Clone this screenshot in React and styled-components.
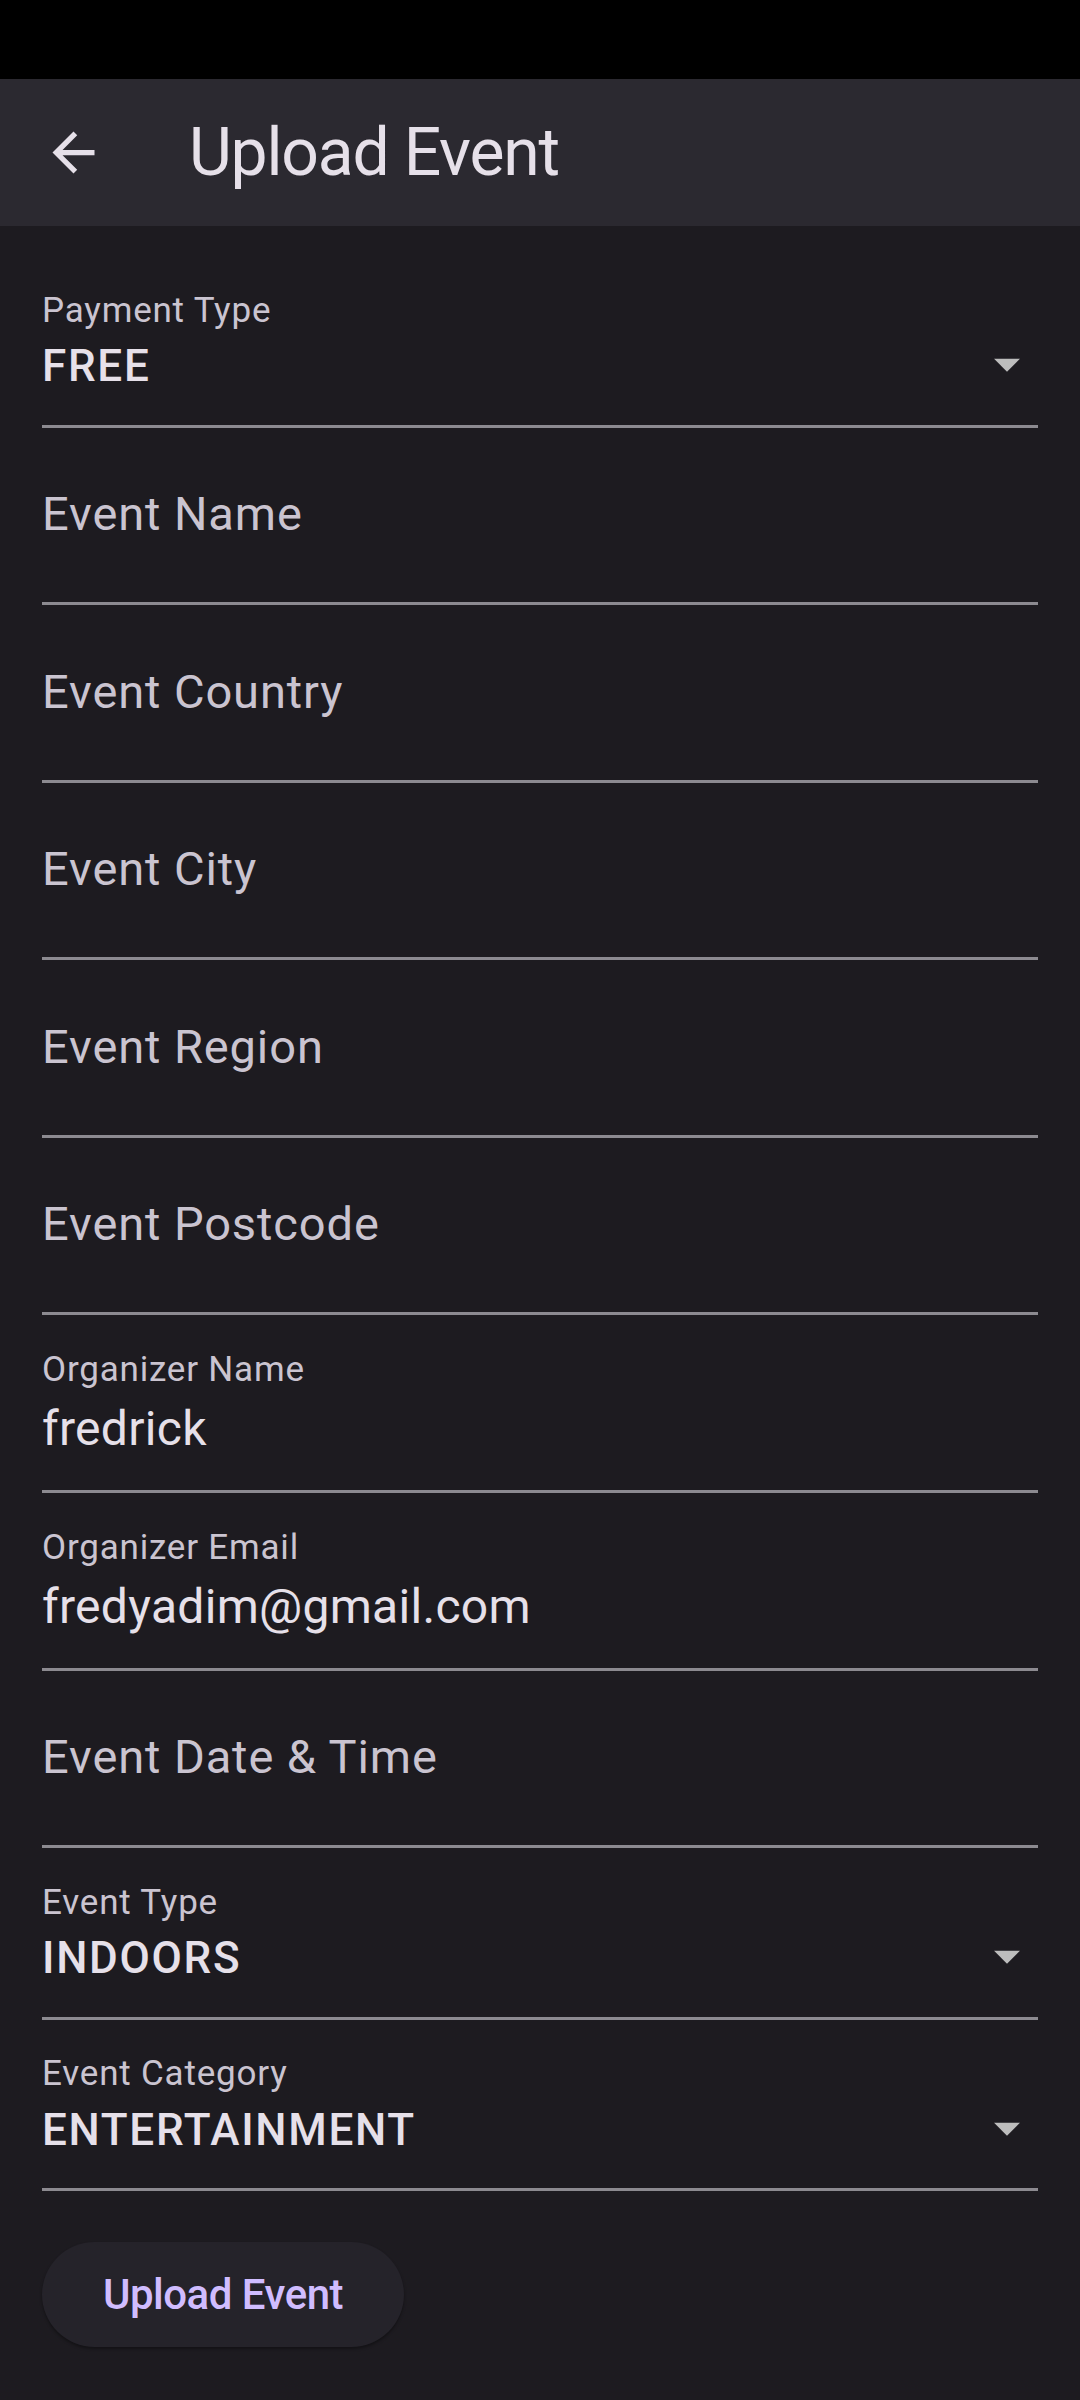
import React from 'react'
import styled, { createGlobalStyle } from 'styled-components'

const GlobalStyle = createGlobalStyle`
  html, body {
    margin: 0;
    padding: 0;
    background: #1d1b20;
  }
  body {
    font-family: Roboto, "Noto Sans", "Liberation Sans", sans-serif;
    -webkit-font-smoothing: antialiased;
  }
  * { box-sizing: border-box; }
`

const fields = [
  { kind: 'select', label: 'Payment Type', value: 'FREE' },
  { kind: 'text', hint: 'Event Name' },
  { kind: 'text', hint: 'Event Country' },
  { kind: 'text', hint: 'Event City' },
  { kind: 'text', hint: 'Event Region' },
  { kind: 'text', hint: 'Event Postcode' },
  { kind: 'text', label: 'Organizer Name', value: 'fredrick' },
  { kind: 'text', label: 'Organizer Email', value: 'fredyadim@gmail.com' },
  { kind: 'text', hint: 'Event Date & Time' },
  { kind: 'select', label: 'Event Type', value: 'INDOORS' },
  { kind: 'select', label: 'Event Category', value: 'ENTERTAINMENT' },
]

function BackArrow() {
  return (
    <svg width="63" height="63" viewBox="0 0 24 24" fill="#e6e0e9">
      <path d="M20 11H7.83l5.59-5.59L12 4l-8 8 8 8 1.41-1.41L7.83 13H20v-2z" />
    </svg>
  )
}

function DropArrow() {
  return (
    <svg width="62" height="62" viewBox="0 0 24 24" fill="#bdbdbd">
      <path d="M7 10l5 5 5-5z" />
    </svg>
  )
}

function Field({ field }) {
  if (field.kind === 'select') {
    return (
      <SelectField>
        <Label>{field.label}</Label>
        <SelectRow>
          <SelectValue>{field.value}</SelectValue>
          <ArrowSlot><DropArrow /></ArrowSlot>
        </SelectRow>
      </SelectField>
    )
  }
  if (field.value) {
    return (
      <TextField>
        <Label>{field.label}</Label>
        <Value>{field.value}</Value>
      </TextField>
    )
  }
  return (
    <TextField>
      <Hint>{field.hint}</Hint>
    </TextField>
  )
}

export default function App() {
  return (
    <Screen>
      <GlobalStyle />
      <StatusBar />
      <AppBar>
        <IconButton aria-label="Back"><BackArrow /></IconButton>
        <Title>Upload Event</Title>
      </AppBar>
      <Form>
        {fields.map((f, i) => <Field key={i} field={f} />)}
        <UploadButton>Upload Event</UploadButton>
      </Form>
    </Screen>
  )
}

//Styled Components
const Screen = styled.div`
  width: 1080px;
  min-height: 2400px;
  background: #1d1b20;
  display: flex;
  flex-direction: column;
`

const StatusBar = styled.div`
  height: 79px;
  background: #000;
`

const AppBar = styled.header`
  height: 147px;
  background: #2b2930;
  display: flex;
  align-items: center;
  padding-left: 42px;
`

const IconButton = styled.div`
  width: 63px;
  height: 63px;
  display: flex;
  align-items: center;
  justify-content: center;
  svg { display: block; }
`

const Title = styled.h1`
  margin: 0 0 0 84px;
  font-size: 66px;
  font-weight: 400;
  line-height: 1.172;
  letter-spacing: -1.2px;
  color: #e6e0e9;
`

const Form = styled.div`
  padding: 30px 42px 0;
  display: flex;
  flex-direction: column;
  align-items: flex-start;
`

const FieldBase = styled.div`
  width: 100%;
  border-bottom: 3px solid #8c8a90;
  display: flex;
  flex-direction: column;
`

const TextField = styled(FieldBase)`
  height: 177.6px;
`

const SelectField = styled(FieldBase)`
  height: 171.5px;
`

const Label = styled.div`
  margin-top: 33.5px;
  font-size: 35px;
  line-height: 41px;
  letter-spacing: 0.8px;
  color: #cac4d0;
`

const Value = styled.div`
  margin-top: 11px;
  font-size: 48px;
  line-height: 56.3px;
  letter-spacing: 0.3px;
  color: #e6e0e9;
`

const Hint = styled.div`
  margin-top: 58.5px;
  font-size: 47px;
  line-height: 55px;
  letter-spacing: 0.9px;
  color: #cac4d0;
`

const SelectRow = styled.div`
  margin-top: 10.7px;
  height: 51.6px;
  display: flex;
  align-items: center;
  justify-content: space-between;
`

const SelectValue = styled.div`
  font-size: 44px;
  font-weight: 500;
  line-height: 51.6px;
  letter-spacing: 1.7px;
  color: #e6e0e9;
`

const ArrowSlot = styled.div`
  width: 62px;
  height: 62px;
  margin-top: -6px;
  svg { display: block; }
`

const UploadButton = styled.button`
  margin-top: 51px;
  height: 105px;
  padding: 0 61px;
  border: none;
  border-radius: 999px;
  background: #25232a;
  box-shadow: 0 2px 3px rgba(0, 0, 0, 0.35);
  font-family: Roboto, "Noto Sans", sans-serif;
  font-size: 42px;
  font-weight: 500;
  letter-spacing: -0.5px;
  color: #d0bcff;
  cursor: pointer;
`
